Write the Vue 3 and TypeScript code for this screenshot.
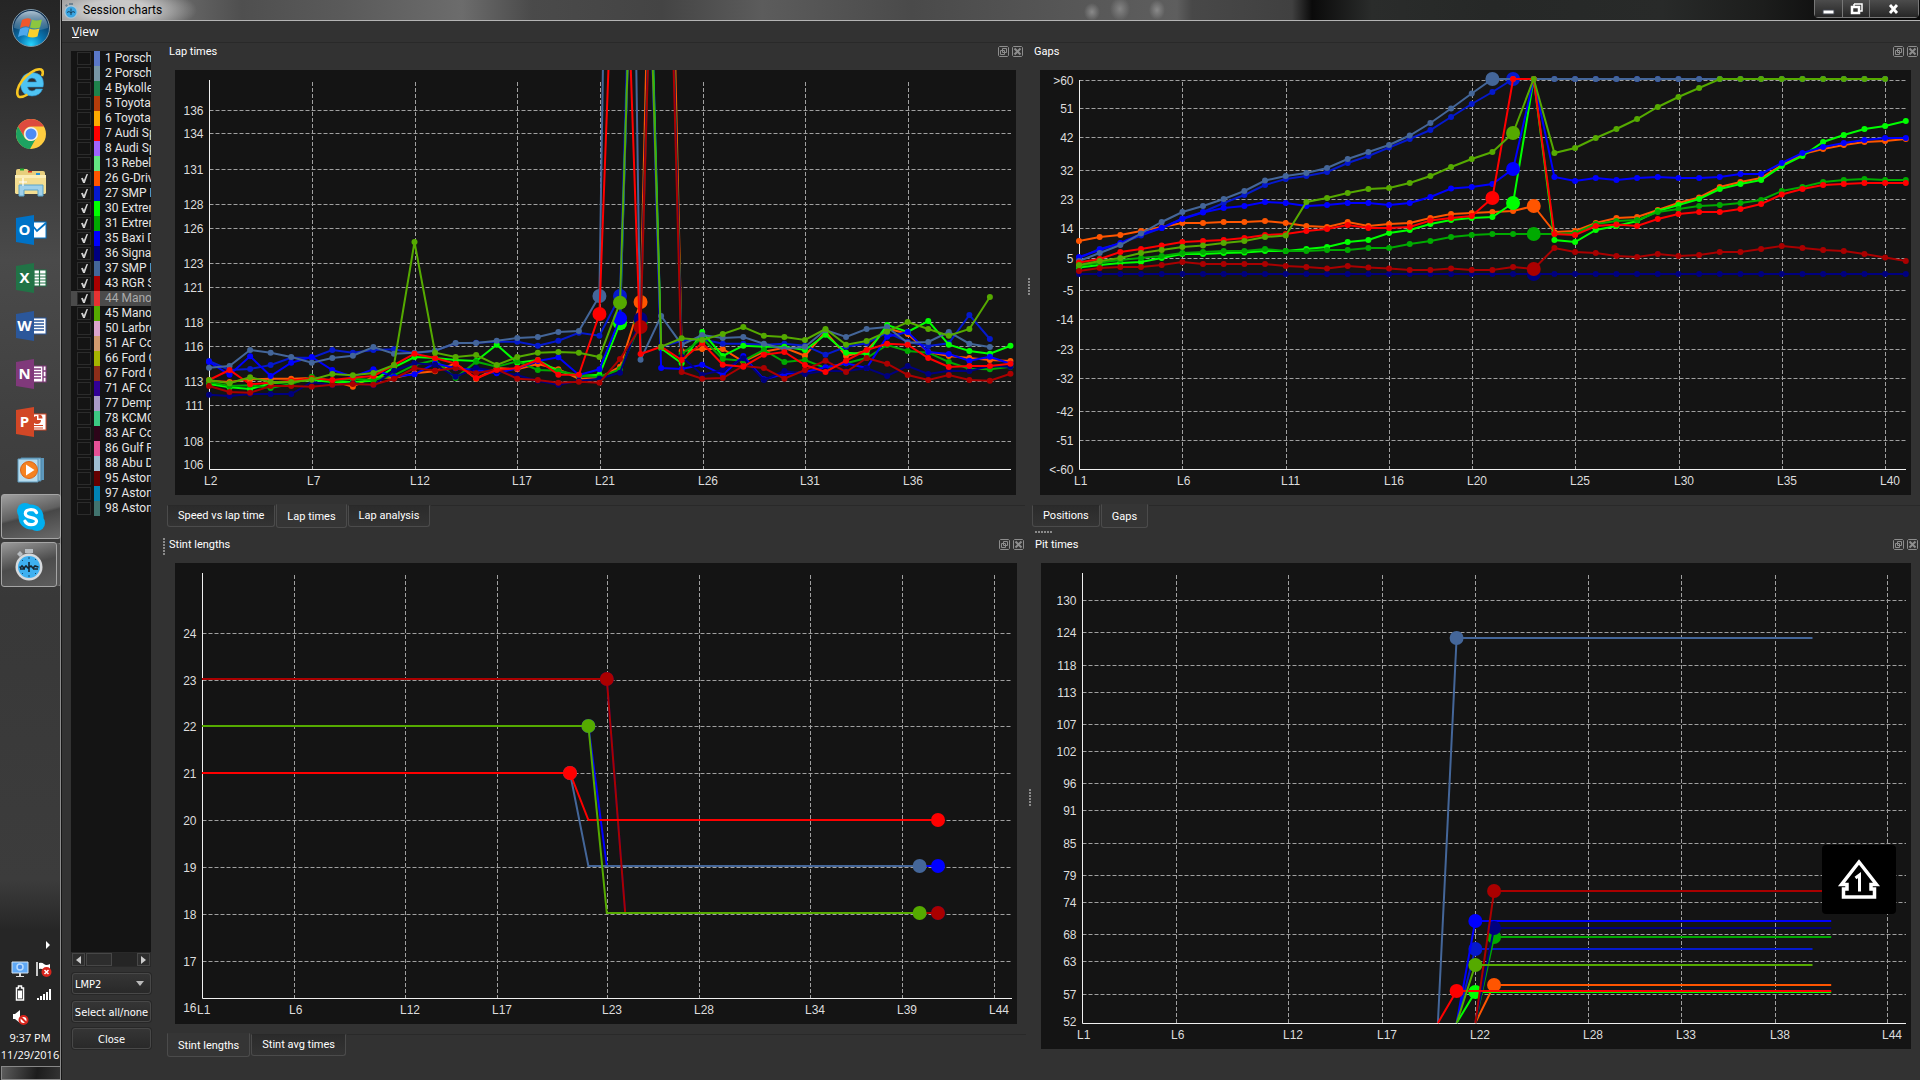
<script setup lang="ts">
import { ref } from 'vue'

interface Car { label: string; color: string; checked: boolean }
interface Series { color: string; from: number; pits: number[]; y: number[] }
interface Tick { label: string; at: number; grid?: boolean }
interface Chart {
  id: string
  title: string
  width: number
  height: number
  axisX: number
  axisTop: number
  axisBottom: number
  axisRight: number
  firstLap: number
  lapStep: number
  dots: boolean
  baseline: number
  xTicks: Tick[]
  yTicks: Tick[]
  series: Series[]
  tabs: string[]
  active: string
}

const C = {
  c26: '#ff5500', c27: '#0519cd', c30: '#00ff00', c31: '#00aa00', c35: '#0000ff',
  c36: '#00007f', c37: '#446699', c43: '#aa0000', c44: '#ff0000', c45: '#55aa00',
}

const cars = ref<Car[]>(([
  ['1 Porsche', '#5a78c8'], ['2 Porsche', '#7896a5'], ['4 Bykolles', '#1e824b'],
  ['5 Toyota', '#b43c0a'], ['6 Toyota', '#ffaa00'], ['7 Audi Sp', '#ff0000'],
  ['8 Audi Sp', '#a064ff'], ['13 Rebelli', '#64e682'], ['26 G-Driv', C.c26],
  ['27 SMP R', C.c27], ['30 Extrem', C.c30], ['31 Extrem', C.c31],
  ['35 Baxi D', C.c35], ['36 Signat', C.c36], ['37 SMP R', C.c37],
  ['43 RGR S', C.c43], ['44 Manor', '#e63232'], ['45 Manor', C.c45],
  ['50 Larbre', '#dca5cd'], ['51 AF Cor', '#d29b6e'], ['66 Ford C', '#a5b400'],
  ['67 Ford C', '#8c2d19'], ['71 AF Cor', '#320096'], ['77 Demps', '#aa9bc8'],
  ['78 KCMG', '#3cc882'], ['83 AF Cor', '#2d0519'], ['86 Gulf R', '#e65096'],
  ['88 Abu D', '#a0bed2'], ['95 Aston', '#640000'], ['97 Aston', '#0082b4'],
  ['98 Aston', '#41736e'],
] as [string, string][]).map(([label, color], i) => ({ label, color, checked: i >= 8 && i <= 17 })))

const selected = '44 Manor'
const carClass = ref('LMP2')

const ticks = (text: string): Tick[] =>
  text.split(' ').map((t) => {
    const [label, at] = t.split('@')
    return { label, at: Number(at) }
  })

/* Lap time samples are kept in thirds of a plot unit */
const lap = (color: string, pits: number[], y: number[]): Series => ({ color, from: 2, pits, y: y.map((v) => (v - 120) / 3) })
const gap = (color: string, pits: number[], y: number[]): Series => ({ color, from: 1, pits, y })
const fill = (n: number, v: number): number[] => Array.from({ length: n }, () => v)

/* A stint plot: one level up to the stop, another one after it */
const STINT: Record<number, number> = { 23: 116, 22: 163, 21: 210, 20: 257, 19: 303, 18: 350 }
const stint = (color: string, first: number, second: number, last: number): Series => ({
  color, from: 1, pits: [first, last],
  y: [...fill(first, STINT[first]), ...fill(last - first, STINT[second])],
})
const pit = (color: string, lapNo: number, y: number, last: number): Series => ({
  color, from: lapNo - 1, pits: [lapNo], y: [460, ...fill(last - lapNo + 1, y)],
})

const lapTimes: Chart = {
  id: 'laps', title: 'Lap times', width: 841, height: 425,
  axisX: 34.5, axisTop: 10, axisBottom: 399.5, axisRight: 836,
  firstLap: 2, lapStep: 20.55, dots: true, baseline: 415,
  xTicks: ticks('L2@34.5 L7@137.5 L12@240.5 L17@342.5 L21@425.5 L26@528.5 L31@630.5 L36@733.5'),
  yTicks: [...ticks('136@40.5 134@63.5 131@99.5 128@134.5 126@158.5 123@193.5 121@217.5 118@252.5 116@276.5 113@311.5 111@335.5 108@371.5'), { label: '106', at: 394.5, grid: false }],
  series: [
    lap(C.c26, [23], [1052, 1056, 1048, 1046, 1046, 1044, 1052, 1070, 1040, 1044, 1030, 1024, 1000, 1046, 1014, 1018, 1002, 1018, 1046, 1044, 1010, 816, -1800, 963, 957, 957, 995, 965, 953, 977, 905, 978, 962, 895, 912, 966, 978, 984, 990, 993]),
    lap(C.c27, [22], [993, 1020, 1017, 1005, 983, 983, 960, 968, 960, 958, 970, 962, 940, 938, 935, 935, 947, 932, 908, 917, 798, -1300, 950, 932, 928, 941, 941, 944, 941, 947, 974, 950, 940, 908, 935, 948, 940, 855, 927]),
    lap(C.c30, [22], [1062, 1072, 1077, 1060, 1056, 1050, 1056, 1056, 1052, 1012, 981, 984, 990, 993, 944, 998, 990, 1024, 1038, 1034, 880, -1250, 955, 1000, 906, 978, 947, 950, 950, 960, 914, 968, 972, 885, 906, 873, 944, 963, 971, 947]),
    lap(C.c31, [23], [1056, 1068, 1066, 1074, 1062, 1040, 1054, 1046, 1050, 1036, 1005, 990, 1044, 995, 1010, 994, 1020, 1022, 1036, 1042, 1018, 880, -1400, 972, 925, 987, 992, 960, 996, 990, 1014, 1000, 984, 945, 963, 968, 996, 1016, 1018, 1010]),
    lap(C.c35, [22], [996, 1034, 979, 1038, 998, 981, 1020, 1040, 1018, 1040, 1033, 1000, 1015, 1020, 1030, 1015, 993, 982, 1035, 1018, 865, -1150, 1014, 1017, 1004, 1034, 978, 1048, 1032, 1026, 1012, 1000, 1014, 920, 906, 966, 972, 992, 980, 1001]),
    lap(C.c36, [23], [1094, 1098, 1092, 1092, 1092, 1056, 1066, 1060, 1066, 1022, 1000, 1004, 1040, 1014, 1024, 1036, 1052, 1064, 1052, 1046, 1028, 867, -1350, 980, 1034, 1020, 985, 1050, 1023, 1032, 1022, 1024, 1014, 1038, 1008, 1032, 1022, 1023, 1008, 1010]),
    lap(C.c37, [21], [1013, 1008, 960, 968, 981, 998, 984, 977, 951, 971, 968, 962, 939, 939, 932, 924, 921, 906, 903, 798, -3200, 989, 858, 944, 915, 924, 921, 941, 957, 950, 900, 921, 897, 891, 938, 936, 906, 941, 951]),
    lap(C.c43, [23], [1068, 1086, 1088, 1068, 1068, 1070, 1064, 1062, 1064, 1046, 1014, 1022, 1014, 1030, 1018, 1046, 1050, 1058, 1055, 1058, 987, 891, -1300, 1026, 1046, 1044, 1008, 1014, 1046, 1020, 992, 1026, 984, 1001, 1035, 1050, 1035, 1050, 1052, 1031]),
    lap(C.c44, [21], [1050, 1020, 1063, 1058, 1052, 1045, 1050, 1043, 1038, 1005, 971, 984, 1001, 1045, 1020, 1014, 990, 1034, 1034, 852, -820, 972, 950, 990, 939, 1004, 1010, 974, 966, 1005, 1026, 992, 960, 941, 944, 984, 1011, 1008, 1008, 1001]),
    lap(C.c45, [22], [1050, 1060, 1042, 1056, 1056, 1049, 1032, 1036, 1029, 1005, 636, 968, 981, 975, 1005, 981, 968, 966, 968, 981, 818, -1100, 950, 925, 930, 912, 891, 917, 921, 930, 897, 944, 933, 905, 876, 897, 917, 897, 801]),
  ],
  tabs: ['Speed vs lap time', 'Lap times', 'Lap analysis'], active: 'Lap times',
}

const gaps: Chart = {
  id: 'gaps', title: 'Gaps', width: 871, height: 425,
  axisX: 39.5, axisTop: 10, axisBottom: 399.5, axisRight: 866,
  firstLap: 1, lapStep: 20.67, dots: true, baseline: 415,
  xTicks: ticks('L1@39.5 L6@142.5 L11@246.5 L16@349.5 L20@432.5 L25@535.5 L30@639.5 L35@742.5 L40@845.5'),
  yTicks: ticks('>60@10.5 51@38.5 42@67.5 32@100.5 23@129.5 14@158.5 5@188.5 -5@220.5 -14@249.5 -23@279.5 -32@308.5 -42@341.5 -51@370.5 <-60@399.5'),
  series: [
    gap(C.c26, [23], [171, 167, 165, 161, 157, 153, 153, 152, 152, 151, 153, 156, 157, 152, 156, 154, 153, 148, 144, 143, 142, 141, 136, 162, 161, 153, 148, 147, 140, 133, 127.5, 117, 112, 108, 95, 84, 79, 75, 72, 71, 69]),
    gap(C.c27, [22], [188, 179, 173.5, 165.5, 158, 148.5, 142, 133, 125, 115, 109, 106, 102, 93, 86, 77.5, 69, 60, 47, 34, 22, ...fill(19, 9)]),
    gap(C.c30, [22], [197.5, 195, 193, 192, 188, 184, 184, 183, 182.5, 181, 181, 179, 177, 172, 170, 163, 160, 154, 150, 148, 147, 133, 9, 170, 172, 160, 156, 151, 141, 135, 129, 119, 114, 110, 96, 86, 72, 65, 59, 56, 51]),
    gap(C.c31, [23], [196, 192.5, 190, 188, 186, 183, 182, 181, 181, 179, 181, 181, 180, 180, 178, 178, 174, 171, 167, 165, 164, 164, 164, 164, 163, 154, 151, 150, 142, 139, 136, 135, 133, 130, 121, 117, 112, 110, 109, 110, 110]),
    gap(C.c35, [22], [187, 180, 173, 164, 158, 149, 142.5, 138, 136, 132, 133, 136, 135, 133, 133, 135, 133, 127, 118.5, 117, 114, 99, 9, 107, 111, 108, 110, 108, 107, 108, 108, 107, 104, 104, 93, 83, 77, 73, 70, 68, 68]),
    gap(C.c36, [23], fill(41, 204)),
    gap(C.c37, [21], [191, 183, 175, 163.5, 152, 142, 136, 129, 121, 110.5, 106, 103, 98, 89, 82, 75, 65.5, 53, 38.5, 23.5, ...fill(20, 9)]),
    gap(C.c43, [23], [201, 198, 197, 197, 195, 192, 194, 194, 194, 194, 196, 197, 198.5, 196, 197.5, 198.5, 200, 200, 198.5, 200, 200, 197, 199, 178, 182, 183, 186, 187, 184, 186, 185, 182, 182, 179, 176, 178, 180, 181, 184, 187.5, 191]),
    gap(C.c44, [21], [192.5, 189, 182, 179, 175.5, 172, 171, 170, 168, 165, 164, 161, 159, 155, 158, 158, 157, 150.5, 148, 146, 128, 9, 9, 164, 165, 156, 154.5, 156, 149, 144, 142, 142, 139, 134, 124.5, 119, 115, 114, 113, 113, 113]),
    gap(C.c45, [22], [195, 191, 188, 183, 180, 177, 175.5, 173, 171, 167, 165.5, 132, 128, 123, 119, 118, 113, 106, 97, 89, 82, 63, 9, 83, 78, 68, 59, 49, 37, 27, 18, ...fill(9, 9)]),
  ],
  tabs: ['Positions', 'Gaps'], active: 'Gaps',
}

const stints: Chart = {
  id: 'stints', title: 'Stint lengths', width: 842, height: 461,
  axisX: 27.5, axisTop: 10, axisBottom: 435.5, axisRight: 837,
  firstLap: 1, lapStep: 18.4, dots: false, baseline: 451,
  xTicks: ticks('L1@27.5 L6@119.5 L12@230.5 L17@322.5 L23@432.5 L28@524.5 L34@635.5 L39@727.5 L44@819.5'),
  yTicks: [...ticks('24@70.5 23@117.5 22@163.5 21@210.5 20@257.5 19@304.5 18@351.5 17@398.5'), { label: '16', at: 444.5, grid: false }],
  series: [
    stint(C.c36, 23, 18, 41), stint(C.c35, 22, 19, 41), stint(C.c37, 21, 19, 40),
    stint(C.c43, 23, 18, 41), stint(C.c44, 21, 20, 41), stint(C.c45, 22, 18, 40),
  ],
  tabs: ['Stint lengths', 'Stint avg times'], active: 'Stint lengths',
}

const pits: Chart = {
  id: 'pits', title: 'Pit times', width: 870, height: 486,
  axisX: 41.5, axisTop: 10, axisBottom: 460.5, axisRight: 865,
  firstLap: 1, lapStep: 18.73, dots: false, baseline: 476,
  xTicks: ticks('L1@41.5 L6@135.5 L12@247.5 L17@341.5 L22@434.5 L28@547.5 L33@640.5 L38@734.5 L44@846.5'),
  yTicks: [...ticks('130@37.5 124@69.5 118@102.5 113@129.5 107@161.5 102@188.5 96@220.5 91@247.5 85@280.5 79@312.5 74@339.5 68@371.5 63@398.5 57@431.5'), { label: '52', at: 458.5, grid: false }],
  series: [
    pit(C.c26, 23, 422, 41), pit(C.c27, 22, 386, 40), pit(C.c30, 22, 429, 41), pit(C.c31, 23, 374, 41),
    pit(C.c35, 22, 358, 41), pit(C.c36, 23, 365, 41), pit(C.c37, 21, 75, 40), pit(C.c43, 23, 328, 41),
    pit(C.c44, 21, 428, 41), pit(C.c45, 22, 402, 40),
  ],
  tabs: [], active: '',
}

const rows = [[lapTimes, gaps], [stints, pits]]

const px = (c: Chart, s: Series, i: number): number =>
  c.axisX - 0.5 + (s.from + i - c.firstLap) * c.lapStep
const line = (c: Chart, s: Series): string =>
  s.y.map((y, i) => `${px(c, s, i).toFixed(1)},${y.toFixed(1)}`).join(' ')
const isPit = (s: Series, i: number): boolean => s.pits.includes(s.from + i)

const office = [
  { name: 'Outlook', letter: 'O', color: '#0072c6', kind: 'mail' },
  { name: 'Excel', letter: 'X', color: '#217346', kind: 'grid' },
  { name: 'Word', letter: 'W', color: '#2b579a', kind: 'lines' },
  { name: 'OneNote', letter: 'N', color: '#80397b', kind: 'note' },
  { name: 'PowerPoint', letter: 'P', color: '#d24726', kind: 'pie' },
]
</script>

<template>
  <div class="desktop">
    <aside class="taskbar">
      <button class="launcher orb" aria-label="Start">
        <svg width="40" height="40" viewBox="0 0 40 40">
          <defs>
            <radialGradient id="orb" cx=".5" cy=".95" r=".8">
              <stop offset="0" stop-color="#25d5ff" /><stop offset=".4" stop-color="#0a78b4" /><stop offset="1" stop-color="#0b2c50" />
            </radialGradient>
            <linearGradient id="orbGloss" x1="0" y1="0" x2="0" y2="1">
              <stop offset="0" stop-color="#c8dce8" stop-opacity=".85" /><stop offset="1" stop-color="#5f8fae" stop-opacity=".35" />
            </linearGradient>
          </defs>
          <circle cx="20" cy="20" r="18.5" fill="url(#orb)" stroke="#7f97a6" />
          <path d="M3 20a17 17 0 0 1 34 0q-17 6-34 0z" fill="url(#orbGloss)" />
          <path d="M11 12q5-3 9-1l-2 8q-4-2-9 1z" fill="#f0572a" />
          <path d="M21 11.500q4 2 10 0l-2 8q-5 2-10 0z" fill="#8dc63f" />
          <path d="M9 21q5-3 9-1l-2 8q-4-2-9 1z" fill="#4fa8ec" />
          <path d="M18.500 20.500q4 2 10 0l-2 8q-5 2-10 0z" fill="#fcd02c" />
        </svg>
      </button>
      <button class="launcher ie" aria-label="Internet Explorer">
        <svg width="32" height="32" viewBox="0 0 32 32">
          <path d="M28 20H12.500q.8 4 4.500 4 2.500 0 3.800-2h6.700Q25 29 17 29 6 28.500 5.500 17.500 6 6 17 5.500 28.500 6 28.500 17zM12.500 15h9q-.7-4-4.500-4-3.700 0-4.500 4z" fill="#4fc4f3" stroke="#2a93d1" stroke-width=".6" />
          <path d="M27 9q2-5-1-6.500-4-1-10 3Q5 13 2.500 23q-1 6 2 7 3 .500 8-2.500" fill="none" stroke="#f8c622" stroke-width="2.600" />
        </svg>
      </button>
      <button class="launcher" aria-label="Chrome">
        <svg width="32" height="32" viewBox="0 0 32 32">
          <circle cx="16" cy="16" r="15" fill="#ffcd40" />
          <path d="M3 8.500A15 15 0 0 1 29 8.500H16a7.500 7.500 0 0 0-6.500 11z" fill="#dd4b3e" />
          <path d="M3 8.500A15 15 0 0 0 15 31l6.500-11.500a7 7 0 0 1-12 0z" fill="#1da261" />
          <circle cx="16" cy="16" r="7" fill="#f1f1f1" /><circle cx="16" cy="16" r="5.500" fill="#4c8bf5" />
        </svg>
      </button>
      <button class="launcher" aria-label="File Explorer">
        <svg width="34" height="32" viewBox="0 0 34 32">
          <path d="M2 5q0-2 2-2h9l2 2h14q2 0 2 2v3H2z" fill="#e8cf7d" />
          <path d="M6 2.500h4v2H6z" fill="#27a82f" /><path d="M14 5h4v1.500h-4z" fill="#d33522" /><path d="M22 7h4v2h-4z" fill="#2694d8" />
          <path d="M1 9h31v18l-1 1H2l-1-1z" fill="#f3dd91" /><path d="M1 9h31v3H1z" fill="#fbedb6" />
          <path d="M5 30V19h24v11h-5v-6H10v6z" fill="#9fd0ea" stroke="#5ba3c9" />
          <path d="M9 12v8M5 16h8" stroke="#fff" stroke-width="1.200" />
        </svg>
      </button>
      <button v-for="o in office" :key="o.name" class="launcher" :aria-label="o.name">
        <svg width="32" height="32" viewBox="0 0 32 32">
          <rect x="14" y="8" width="17" height="16" fill="#fff" :stroke="o.color" />
          <g fill="none" :stroke="o.color">
            <path v-if="o.kind === 'mail'" d="M17 11l5 6 9-8" stroke-width="1.800" />
            <path v-if="o.kind === 'grid'" d="M19 8v16M24.500 8v16M18 12h13M18 15h13M18 18h13M18 21h13" stroke-width="1.200" />
            <path v-if="o.kind === 'lines'" d="M19 11h10M19 14h10M19 17h10M19 20h10" stroke-width="1.400" />
            <path v-if="o.kind === 'note'" d="M19 11h7M19 14h7M19 17h7M19 20h7M28 8v16M28 13h3M28 19h3" stroke-width="1.400" />
            <path v-if="o.kind === 'pie'" d="M19 19.500h9M19 22h9" stroke-width="1.200" />
          </g>
          <g v-if="o.kind === 'pie'" :fill="o.color"><path d="M22 10v4h4a4 4 0 1 1-4-4z" /><path d="M23.500 8.500a4 4 0 0 1 4 4h-4z" /></g>
          <path d="M1 4l18-3v30L1 28z" :fill="o.color" />
          <text x="9.500" y="21" class="office-letter">{{ o.letter }}</text>
        </svg>
      </button>
      <button class="launcher" aria-label="Media Player">
        <svg width="30" height="28" viewBox="0 0 30 28">
          <path d="M8 2h20v22H8z" fill="#5d98bd" /><path d="M5 2h20v23H5z" fill="#8fc1dd" stroke="#4e86a8" /><path d="M2 3h20v23H2z" fill="#b7dcee" stroke="#5f9abd" />
          <circle cx="13" cy="14" r="8.500" fill="#f58220" stroke="#d9661a" /><path d="M10 8.500l8.500 5.500L10 19.500z" fill="#fff" />
        </svg>
      </button>
      <button class="running" aria-label="Skype">
        <svg width="32" height="32" viewBox="0 0 32 32">
          <circle cx="16" cy="16" r="12.500" fill="#00aff0" /><circle cx="10" cy="10" r="8" fill="#00aff0" /><circle cx="22" cy="22" r="8" fill="#00aff0" />
          <path d="M21.500 11.500Q20 8.500 16 8.500q-5.500.3-5.700 4 0 3 5.700 4 5.500 1 5.500 3.700-.3 3.500-5.500 3.500-4.500 0-6-3.500" fill="none" stroke="#fff" stroke-width="3.200" stroke-linecap="round" />
        </svg>
      </button>
      <button class="running grouped" aria-label="Session charts">
        <svg width="32" height="34" viewBox="0 0 32 34">
          <path d="M12 1h8v4h-8zM4 6l3-3 3 3-3 3z" fill="#b9bec2" />
          <circle cx="16" cy="19" r="13.500" fill="#d6dadd" /><circle cx="16" cy="19" r="11" fill="#3eb0f0" />
          <path d="M7 20l2-2 2 2 2-2 2 2 3-2 2 2 2-2 3 1M7 21h5M20 21h5M16 14v10" fill="none" stroke="#16242e" stroke-width="1.600" />
          <path d="M16 9v2M16 27v2M6 19h1M25 19h1M9 12l1 1M22 12l1-1M9 26l1-1M23 26l-1-1" stroke="#124b70" />
        </svg>
      </button>
      <div class="tray">
        <svg class="tray-arrow" width="6" height="10" viewBox="0 0 6 10"><path d="M1 1l4 4-4 4z" fill="#fff" /></svg>
        <div class="tray-icons">
          <svg width="18" height="18" viewBox="0 0 18 18"><path d="M1 2h16v11H1z" fill="#5fa8f5" stroke="#d5e3f0" /><circle cx="9" cy="7" r="3" fill="#4b8fe8" stroke="#b8dcff" stroke-width="1.500" /><path d="M5 16h8v1H5zM8 13h2v3H8z" fill="#ddd" /></svg>
          <svg width="18" height="18" viewBox="0 0 18 18"><path d="M2 2v14" stroke="#fff" stroke-width="1.500" /><path d="M4 3q3-1 5 1t6 0v6q-3 2-6 0t-5-1z" fill="#fff" /><circle cx="11.500" cy="12" r="5" fill="#d9251c" /><path d="M9.500 10l4 4M13.500 10l-4 4" stroke="#fff" stroke-width="1.500" /></svg>
          <svg width="18" height="18" viewBox="0 0 18 18"><path d="M5.500 4h2V2h3v2h2v12h-7z" fill="none" stroke="#fff" stroke-width="1.500" /><path d="M7 6.500h4v8H7z" fill="#fff" /></svg>
          <svg width="18" height="18" viewBox="0 0 18 18"><path d="M2 14h2v2H2zM5 12h2v4H5zM8 10h2v6H8zM11 8h2v8h-2zM14 5h2v11h-2z" fill="#fff" /></svg>
          <svg width="18" height="18" viewBox="0 0 18 18"><path d="M2 6h2l5-4v13l-5-4H2z" fill="#fff" /><circle cx="12.500" cy="12" r="4" fill="#fff" stroke="#d9251c" stroke-width="2" /><path d="M10 9.500l5 5" stroke="#d9251c" stroke-width="2" /></svg>
        </div>
        <div class="clock"><div>9:37 PM</div><div>11/29/2016</div></div>
        <button class="peek" aria-label="Show desktop"></button>
      </div>
    </aside>

    <main class="window">
      <header class="titlebar">
        <svg width="16" height="18" viewBox="0 0 32 34" aria-hidden="true">
          <path d="M12 1h8v4h-8zM4 6l3-3 3 3-3 3z" fill="#6f8290" /><circle cx="16" cy="19" r="13.500" fill="#a8c6d8" /><circle cx="16" cy="19" r="11" fill="#3aa5e2" />
          <path d="M8 20l4-2 4 3 4-3 4 2M16 12v13" fill="none" stroke="#17435f" stroke-width="2" />
        </svg>
        <h1>Session charts</h1>
        <div class="winbuttons">
          <button aria-label="Minimize"><svg width="13" height="12" viewBox="0 0 13 12"><path d="M1 7h11v4H1z" fill="#fff" stroke="#40444f" /></svg></button>
          <button aria-label="Restore"><svg width="13" height="12" viewBox="0 0 13 12"><path d="M4 1h8v7h-2M4 1v3" fill="none" stroke="#fff" stroke-width="1.500" /><path d="M2 4h7v6H2z" fill="none" stroke="#fff" stroke-width="2.500" /></svg></button>
          <button class="close" aria-label="Close window"><svg width="12" height="12" viewBox="0 0 12 12"><path d="M2 2l7 8M9 2l-7 8" stroke="#fff" stroke-width="2.800" /></svg></button>
        </div>
      </header>
      <nav class="menubar"><button><u>V</u>iew</button></nav>

      <div class="body">
        <section class="sidebar">
          <ul class="cars">
            <li v-for="car in cars" :key="car.label" :class="{ selected: car.label === selected }">
              <label>
                <input v-model="car.checked" type="checkbox" />
                <i :style="{ background: car.color }"></i>
                <span>{{ car.label }}</span>
              </label>
            </li>
          </ul>
          <div class="scroll">
            <button aria-label="Scroll left"><svg width="5" height="8" viewBox="0 0 5 8"><path d="M5 0v8L0 4z" fill="#ccc" /></svg></button>
            <div class="thumb"></div>
            <button class="right" aria-label="Scroll right"><svg width="5" height="8" viewBox="0 0 5 8"><path d="M0 0v8l5-4z" fill="#ccc" /></svg></button>
          </div>
          <div class="select">
            <select v-model="carClass" class="control" aria-label="Class"><option>LMP2</option><option>LMP1</option></select>
            <svg width="8" height="5" viewBox="0 0 8 5"><path d="M0 0h8L4 5z" fill="#bbb" /></svg>
          </div>
          <button class="control">Select all/none</button>
          <button class="control">Close</button>
        </section>

        <div class="grip vertical"></div>

        <div class="docks">
          <template v-for="(row, r) in rows" :key="r">
            <div v-if="r" class="grip horizontal"></div>
            <div class="row" :class="'row-' + r">
              <template v-for="(c, k) in row" :key="c.id">
                <div v-if="k" class="grip vertical"></div>
                <section class="dock">
                  <header>
                    <h2>{{ c.title }}</h2>
                    <button :aria-label="'Float ' + c.title"><svg width="11" height="11" viewBox="0 0 11 11"><path d="M1.500.5h8l1 1v8l-1 1h-8l-1-1v-8z" /><path d="M4.500 2.500h4v4h-4zM2.500 4.500h4v4h-4z" /></svg></button>
                    <button :aria-label="'Close ' + c.title"><svg width="11" height="11" viewBox="0 0 11 11"><path d="M1.500.5h8l1 1v8l-1 1h-8l-1-1v-8z" /><path d="M2.500 2.500l6 6M8.500 2.500l-6 6" stroke-width="2" /></svg></button>
                  </header>
                  <svg class="plot" :viewBox="`0 0 ${c.width} ${c.height}`">
                    <g class="gridlines">
                      <template v-for="t in c.yTicks" :key="t.label">
                        <line v-if="t.grid !== false" :x1="c.axisX" :x2="c.axisRight" :y1="t.at" :y2="t.at" />
                      </template>
                      <line v-for="t in c.xTicks.slice(1)" :key="t.label" :x1="t.at" :x2="t.at" :y1="c.axisTop + 2" :y2="c.axisBottom" />
                    </g>
                    <path class="axis" :d="`M${c.axisX} ${c.axisTop}V${c.axisBottom}H${c.axisRight}`" />
                    <g class="labels">
                      <text v-for="t in c.yTicks" :key="t.label" :x="c.axisX - 6" :y="t.at + 4.5" text-anchor="end">{{ t.label }}</text>
                      <text v-for="t in c.xTicks" :key="t.label" :x="t.at - 5.5" :y="c.baseline">{{ t.label }}</text>
                    </g>
                    <g v-for="(s, i) in c.series" :key="i">
                      <polyline :points="line(c, s)" fill="none" :stroke="s.color" stroke-width="2" />
                      <template v-for="(y, j) in s.y" :key="j">
                        <circle v-if="c.dots || isPit(s, j)" :cx="px(c, s, j)" :cy="y" :r="isPit(s, j) ? 7 : 3" :fill="s.color" />
                      </template>
                    </g>
                  </svg>
                  <div v-if="c.tabs.length" class="tabs" role="tablist">
                    <button v-for="t in c.tabs" :key="t" role="tab" :class="{ active: t === c.active }">{{ t }}</button>
                    <div class="rule"></div>
                  </div>
                </section>
              </template>
            </div>
          </template>
        </div>
      </div>
    </main>

    <div class="osd">
      <svg width="44" height="44" viewBox="0 0 44 44">
        <path d="M22 4L4.500 26.500H10V31H6.500v8h31v-8H34v-4.500h5.500z" fill="none" stroke="#fff" stroke-width="3.500" />
        <path d="M18.500 20l4-3v16.500" fill="none" stroke="#fff" stroke-width="3" />
      </svg>
    </div>
  </div>
</template>

<style>
body { margin: 0; background: #323232; }
</style>

<style scoped>
* { box-sizing: border-box; }
button { border: 0; padding: 0; background: none; color: inherit; font: inherit; display: block; }
svg { display: block; }
.desktop { position: relative; display: flex; min-height: 100vh; overflow: hidden; background: #323232; color: #fff; font-family: Roboto, "Noto Sans", sans-serif; font-size: 11px; }

.taskbar { flex: none; width: 62px; display: flex; flex-direction: column; align-items: center; border-right: 1px solid #161616; box-shadow: inset -1px 0 #8c8c8c; background: linear-gradient(#252525 0, #2c2c2c 60px, #4a4a4a 260px, #404040 420px, #383838 600px, #3c3c3c 880px, #262626 930px, #262626); }
.launcher { height: 48px; display: grid; place-items: center; }
.orb { height: 56px; }
.ie { height: 54px; }
.office-letter { fill: #fff; font: bold 15px "Open Sans", "Noto Sans", sans-serif; text-anchor: middle; }
.running { width: 60px; height: 45px; margin-bottom: 3px; display: grid; place-items: center; border: 1px solid #a5a5a5; border-radius: 3px; background: linear-gradient(165deg, #a0a0a0, #606060 45%, #474747 50%, #6a6a6a); }
.grouped { align-self: flex-start; width: 56px; margin-left: 1px; box-shadow: 4px 0 0 -1px #555, 5px 0 0 -1px #999; background: linear-gradient(165deg, #9a9a9a, #4c4c4c 50%, #5d5d5d); }
.tray { margin-top: auto; width: 100%; }
.tray-arrow { margin: 0 0 10px 45px; }
.tray-icons { display: grid; grid-template-columns: 18px 18px; gap: 6px; margin: 0 0 3px 11px; }
.clock { width: 60px; text-align: center; font: 11px/17px "Open Sans", "Noto Sans", sans-serif; white-space: nowrap; margin-bottom: 3px; }
.peek { width: 60px; height: 14px; margin-left: 1px; border: 1px solid #888; background: linear-gradient(100deg, #5c5c5c, #1c1c1c 60%, #333); }

.window { flex: 1; min-width: 0; display: flex; flex-direction: column; }
.titlebar { height: 21px; flex: none; display: flex; align-items: flex-start; border-bottom: 1px solid #b4b4b4; background: radial-gradient(ellipse 80px 24px at 55px 10px, #c8c8c8 40%, transparent), radial-gradient(ellipse 8px 9px at 1030px 12px, #8a8a8a, transparent), radial-gradient(ellipse 10px 12px at 1058px 9px, #848484, transparent), radial-gradient(ellipse 8px 10px at 1095px 10px, #8a8a8a, transparent), linear-gradient(90deg, #8c8c8c 0, #6e6e6e 100px, #4f4f4f 180px, #5a5a5a 280px, #6c6c6c 400px, #4a4a4a 470px, #444 600px, #5c5c5c 700px, #4a4a4a 850px, #565656 1000px, #5e5e5e 1115px, #484848 1130px, #404040 1230px, #0a0a0a 1250px, #2a2c2b 1310px, #262827 1430px, #282a29 1600px, #1c1d1c 1700px, #0c0c0c 1780px, #0a0a0a); }
.titlebar > svg { margin: 2px 0 0 1px; }
.titlebar h1 { margin: 2px 0 0 4px; font: 12px/17px Roboto, "Noto Sans", sans-serif; color: #000; }
.winbuttons { margin: -1px 1px 0 auto; display: flex; border: 1px solid #777; border-radius: 0 0 4px 4px; background: #2e2e2e; }
.winbuttons button { width: 27px; height: 17px; display: grid; place-items: center; background: linear-gradient(#4c4c4c, #262626); }
.winbuttons button + button { border-left: 1px solid #777; }
.winbuttons .close { width: 49px; }
.menubar { height: 22px; flex: none; border-bottom: 1px solid #292929; padding-left: 10px; }
.menubar button { font: 12px/22px "Open Sans", "Noto Sans", sans-serif; }

.body { flex: 1; display: flex; }
.sidebar { width: 89px; flex: none; display: flex; flex-direction: column; padding: 8px 0 31px 9px; }
.cars { list-style: none; margin: 0; padding: 0; flex: 1; background: #141414; overflow: hidden; }
.cars label { display: flex; height: 15px; align-items: center; white-space: nowrap; color: #e6e6e6; font: 12px/15px Roboto, "Noto Sans", sans-serif; }
.cars input { flex: none; appearance: none; position: relative; margin: 0 3px 0 6px; width: 14px; height: 13px; border: 1px solid #2c2c2c; background: #141414; }
.cars input:checked::after { content: ""; position: absolute; left: 3px; top: 1px; width: 7px; height: 9px; background: #d0d0d0; clip-path: polygon(0 48%, 25% 42%, 42% 68%, 80% 0, 100% 0, 55% 100%, 30% 100%); }
.cars i { flex: none; width: 6px; height: 15px; margin-right: 5px; }
.cars .selected { background: #4b4b4b; }
.cars .selected label { color: #aaa; }
.scroll { display: flex; height: 15px; margin-bottom: 6px; border: 1px solid #292929; gap: 1px; background: #252525; }
.scroll button, .thumb { width: 13px; height: 13px; border: 1px solid #474747; background: #2d2d2d; display: grid; place-items: center; }
.scroll .thumb { width: 26px; }
.scroll .right { margin-left: auto; }
.control { width: 79px; height: 21px; margin: 0 0 6px 1px; padding: 2px 0 0; border: 1px solid #484848; border-radius: 3px; background: linear-gradient(#353535, #292929); color: #fff; text-align: center; font: 11px/17px "DejaVu Sans Condensed", "DejaVu Sans", sans-serif; white-space: nowrap; box-shadow: 0 0 0 1px #272727; }
.control:last-child { margin-bottom: 0; }
.select { position: relative; }
.select .control { appearance: none; text-align: left; padding: 2px 0 0 2px; display: block; margin-bottom: 7px; }
.select svg { position: absolute; right: 7px; top: 8px; pointer-events: none; }

.grip { flex: none; align-self: center; background: repeating-linear-gradient(#8a8a8a 0 2px, transparent 2px 3px); }
.grip.vertical { width: 2px; height: 17px; margin: 0 2px 0 3px; }
.body > .grip.vertical { margin: 0 2px 31px 12px; }
.grip.horizontal { width: 17px; height: 2px; margin: 2px 0 3px; background: repeating-linear-gradient(90deg, #8a8a8a 0 2px, transparent 2px 3px); }
.docks { flex: 1; min-width: 0; display: flex; flex-direction: column; }
.row { display: grid; width: 100%; }
.row-0 { grid-template-columns: 858fr 7px 888fr; }
.row-1 { grid-template-columns: 859fr 7px 887fr; }
.dock { min-width: 0; }
.dock header { display: flex; height: 27px; padding: 0 2px; gap: 3px; }
.dock header button { margin-top: 3px; height: 11px; }
.dock h2 { margin: 0 auto 0 0; font-size: 11px; font-weight: 400; line-height: 18px; }
.dock header svg { fill: none; stroke: #8d8d8d; }
.plot { width: calc(100% - 17px); height: auto; margin-left: 8px; background: #141414; }
.gridlines line { stroke: #a0a0a0; stroke-dasharray: 4 2; }
.axis { fill: none; stroke: #f0f0f0; }
.labels text { fill: #ddd; font: 12px "Liberation Sans", Arial, sans-serif; }
.tabs { display: flex; align-items: flex-start; margin-top: 9px; height: 25px; }
.tabs button { height: 22px; margin: 1px 1px 0 0; padding: 0 10px; border: 1px solid #4b4b4b; border-top-color: #292929; border-radius: 0 0 3px 3px; background: linear-gradient(#2b2b2b, #333); line-height: 20px; white-space: nowrap; }
.tabs .active { height: 24px; margin-top: 0; border-top-color: transparent; background: #353535; line-height: 24px; }
.rule { flex: 1; margin-top: 1px; border-top: 1px solid #292929; }

.osd { position: absolute; right: 24px; bottom: 166px; width: 74px; height: 69px; border-radius: 4px; background: #000; display: grid; place-items: center; }
</style>
